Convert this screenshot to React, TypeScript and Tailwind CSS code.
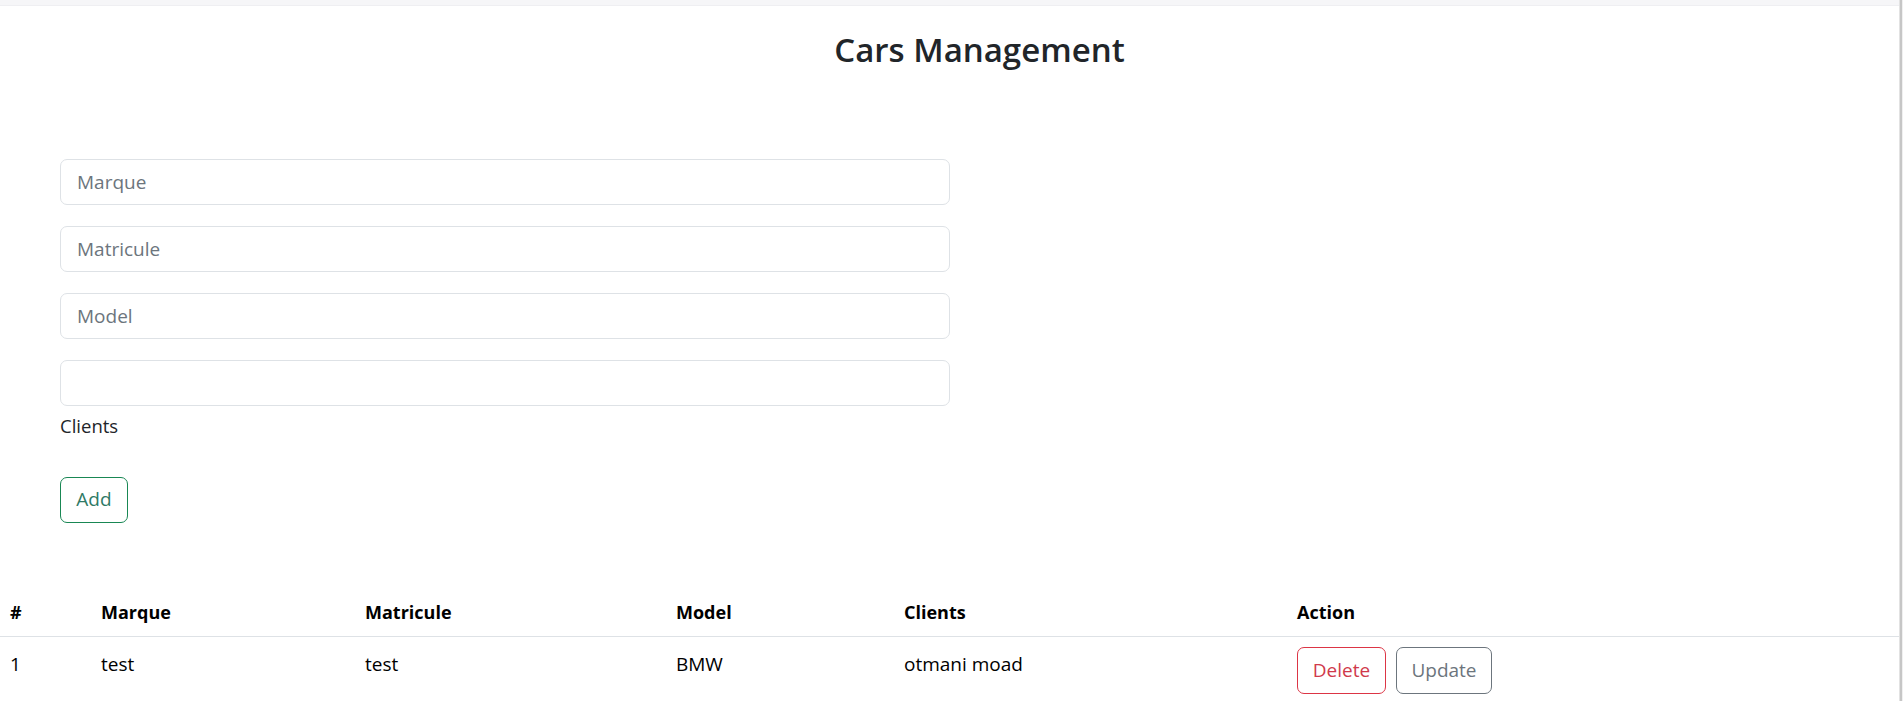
import React from "react";

export default function App() {
  const cols = "grid grid-cols-[91px_264px_311px_228px_393px_1fr]";
  return (
    <div className="relative min-h-[701px] w-full bg-white font-['Open_Sans',sans-serif] text-[#212529]">
      <div className="h-[6px] w-full bg-[#f6f6f8] border-b border-[#efeff2]" />
      <div className="mr-[4px]">
        <div className="pl-[60px] pt-[24px] text-center">
          <h2 className="text-[33px] font-semibold leading-[1.2]">Cars Management</h2>
        </div>

        <form className="ml-[60px] mt-[89px] flex w-[890px] flex-col">
          <input
            className="h-[46px] w-full rounded-[7px] border border-[#dee2e6] px-[16px] text-[19px] text-[#212529] placeholder:text-[#6c757d] outline-none"
            placeholder="Marque"
          />
          <input
            className="mt-[21px] h-[46px] w-full rounded-[7px] border border-[#dee2e6] px-[16px] text-[19px] placeholder:text-[#6c757d] outline-none"
            placeholder="Matricule"
          />
          <input
            className="mt-[21px] h-[46px] w-full rounded-[7px] border border-[#dee2e6] px-[16px] text-[19px] placeholder:text-[#6c757d] outline-none"
            placeholder="Model"
          />
          <input
            className="mt-[21px] h-[46px] w-full rounded-[7px] border border-[#dee2e6] px-[16px] text-[19px] outline-none"
          />
          <label className="mt-[6px] text-[18.5px] leading-[27px] text-[#212529]">Clients</label>
          <div className="mt-[38px]">
            <button
              type="button"
              className="h-[46px] w-[68px] rounded-[7px] border border-[#198754] text-[19px] text-[#2f7a66]"
            >
              Add
            </button>
          </div>
        </form>

        <div className="mt-[67px] w-full">
          <div className={`${cols} border-b border-[#dee2e6] text-[18px] font-bold text-black`}>
            <div className="px-[10px] pt-[9px] pb-[10px] leading-[27px]">#</div>
            <div className="px-[10px] pt-[9px] pb-[10px] leading-[27px]">Marque</div>
            <div className="px-[10px] pt-[9px] pb-[10px] leading-[27px]">Matricule</div>
            <div className="px-[10px] pt-[9px] pb-[10px] leading-[27px]">Model</div>
            <div className="px-[10px] pt-[9px] pb-[10px] leading-[27px]">Clients</div>
            <div className="px-[10px] pt-[9px] pb-[10px] leading-[27px]">Action</div>
          </div>
          <div className={`${cols} text-[19px] text-black`}>
            <div className="px-[10px] pt-[14px] leading-[27px]">1</div>
            <div className="px-[10px] pt-[14px] leading-[27px]">test</div>
            <div className="px-[10px] pt-[14px] leading-[27px]">test</div>
            <div className="px-[10px] pt-[14px] leading-[27px]">BMW</div>
            <div className="px-[10px] pt-[14px] leading-[27px]">otmani moad</div>
            <div className="flex gap-[10px] px-[10px] pt-[10px]">
              <button
                type="button"
                className="h-[47px] w-[89px] rounded-[7px] border border-[#dc3545] text-[19px] text-[#d03a4b]"
              >
                Delete
              </button>
              <button
                type="button"
                className="h-[47px] w-[96px] rounded-[7px] border border-[#6c757d] text-[19px] text-[#6c757d]"
              >
                Update
              </button>
            </div>
          </div>
        </div>
      </div>
      <div className="absolute right-0 top-0 h-full w-[4px] border-l border-[#e2e2e2] bg-[#f0f0f0]">
        <div className="h-full w-[2px] bg-[#c6c6c6]" />
      </div>
    </div>
  );
}
